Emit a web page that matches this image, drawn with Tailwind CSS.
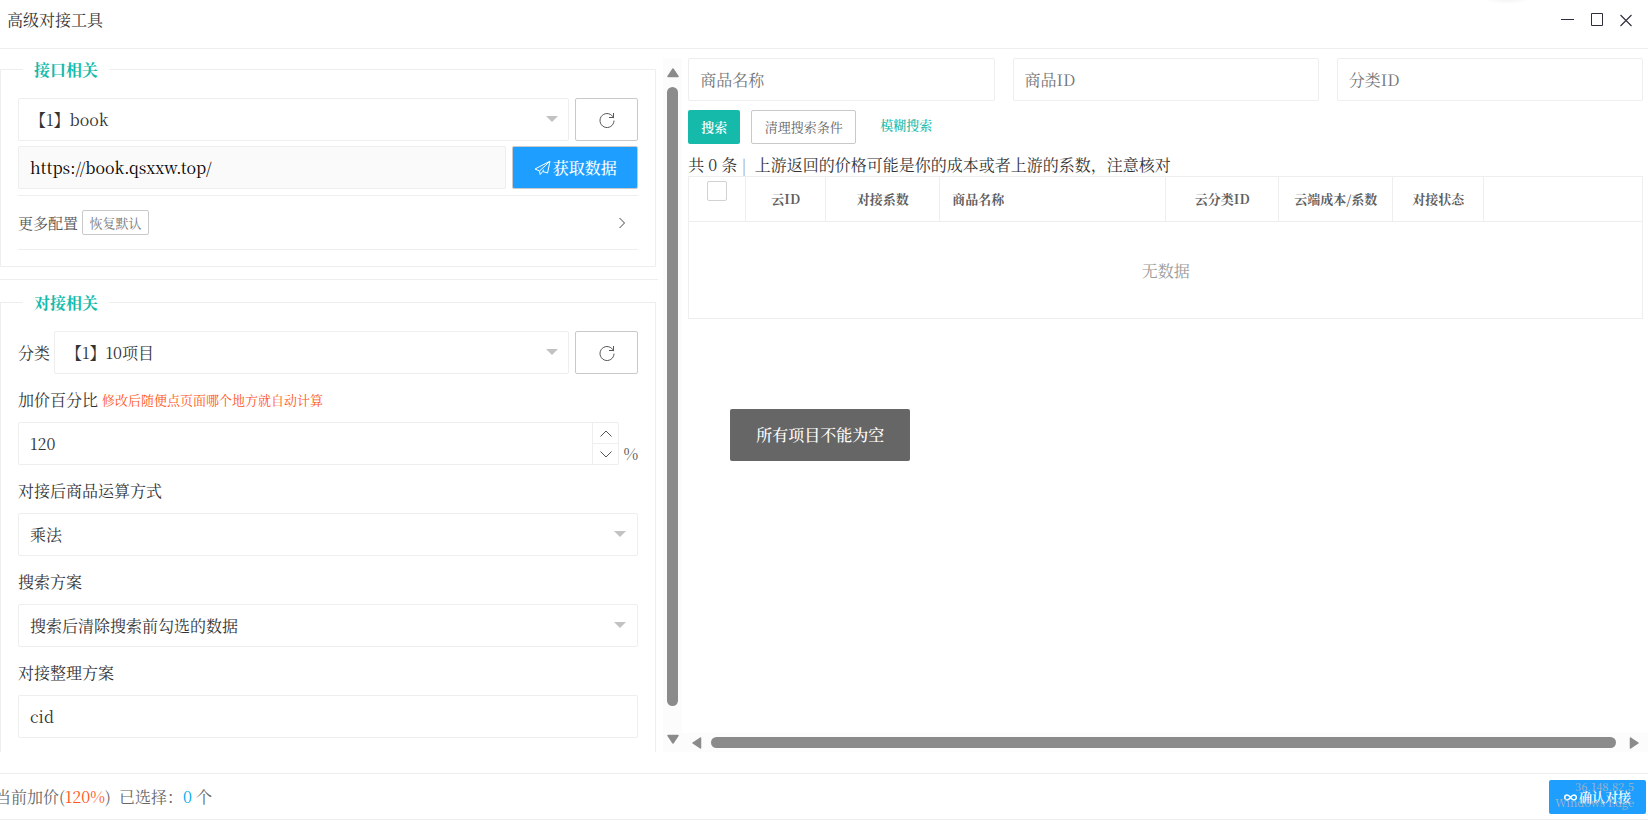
<!DOCTYPE html>
<html lang="zh-CN">
<head>
<meta charset="utf-8">
<title>高级对接工具</title>
<script src="https://cdn.jsdelivr.net/npm/@tailwindcss/browser@4"></script>
</head>
<body class="h-screen flex flex-col overflow-hidden bg-white text-base leading-6 text-[#333] font-['Noto_Serif_CJK_SC','Noto_Serif_SC','Liberation_Serif','Noto_Sans_CJK_SC',serif]">
<svg class="hidden">
  <symbol id="refresh" viewBox="0 0 16 16"><path d="M14.600 6.200A7 7 0 1 0 15 8.600M14.500 1v4.500h-4.500" fill="none" stroke="currentColor" stroke-width="1"/></symbol>
  <symbol id="caret" viewBox="0 0 12 6"><path d="M0 0h12L6 6z" fill="#c2c2c2"/></symbol>
  <symbol id="arrow" viewBox="0 0 12 10"><path d="M6 1 11 8.500H1z" fill="#8b8b8b" stroke="#8b8b8b" stroke-width="1.500" stroke-linejoin="round"/></symbol>
</svg>

<header class="relative h-[49px] shrink-0 flex items-center justify-between border-b border-[#eee] pl-[7px] pr-[15px] pb-2">
  <div class="absolute top-0 left-[90%] w-12 h-1 bg-radial-[at_50%_0%] from-[#f4f4f4] to-white to-70%"></div>
  <h1>高级对接工具</h1>
  <div class="flex items-center gap-[15px] pb-px text-[#2e2d3c]">
    <button aria-label="最小化"><svg class="block w-[14px] h-[14px]" viewBox="0 0 14 14"><path d="M0 6.500h13" stroke="currentColor"/></svg></button>
    <button aria-label="最大化"><svg class="block w-[14px] h-[14px]" viewBox="0 0 14 14"><path d="M1.500.500h11v12h-11z" fill="none" stroke="currentColor"/></svg></button>
    <button aria-label="关闭"><svg class="block w-[14px] h-[14px]" viewBox="0 0 14 14"><path d="M1.500 2 12.500 13M12.500 2 1.500 13" stroke="currentColor" stroke-width="1.100"/></svg></button>
  </div>
</header>

<main class="flex-1 min-h-0 grid grid-cols-[414fr_586fr] pt-[9px] pb-[21px]">
  <section class="min-w-0 min-h-0 flex">
    <div class="flex-1 min-w-0 overflow-hidden pr-[5px]">
      <fieldset class="mr-[2px] border border-[#eee] px-[17px] pb-4">
        <legend class="ml-[5px] px-[11px] leading-[23px] font-bold text-[#16baaa]">接口相关</legend>
        <div class="pt-[17px] flex gap-[6px]">
          <div class="relative flex-1">
            <select aria-label="接口" class="block w-full h-[43px] appearance-none border border-[#eee] rounded-xs pl-[11px] pr-8 bg-white"><option>【1】book</option></select>
            <svg class="absolute right-[11px] top-[18px] w-3 h-[6px] pointer-events-none"><use href="#caret"/></svg>
          </div>
          <button aria-label="刷新接口" class="w-[63px] h-[43px] flex items-center justify-center border border-[#c9c9c9] rounded-xs text-[#555]"><svg class="w-4 h-4"><use href="#refresh"/></svg></button>
        </div>
        <div class="mt-[5px] flex gap-[6px]">
          <input aria-label="接口地址" value="https://book.qsxxw.top/" class="flex-1 min-w-0 h-[43px] border border-[#eee] rounded-xs px-[11px] bg-[#fafafa] text-black">
          <button class="w-[126px] h-[43px] flex items-center justify-center gap-[2px] border border-[#c9c9c9] rounded-xs bg-[#1e9fff] font-medium text-white">
            <svg class="w-[17px] h-4" viewBox="0 0 17 16" fill="none" stroke="currentColor" stroke-width="1" stroke-linejoin="round"><path d="M16 1.200 1 9l4.500 2L16 1.200 13.500 13 8.800 11.500 6.200 14.500 5.500 11M8.800 11.500 9.500 9.500"/></svg>
            获取数据</button>
        </div>
        <div class="mt-[6px] h-[55px] flex items-center border-y border-[#eee] text-[#555]">
          <span class="text-[15px]">更多配置</span>
          <button class="ml-1 h-[25px] w-[67px] border border-[#c9c9c9] rounded-xs text-[13px] leading-5 text-[#777]">恢复默认</button>
          <button aria-label="展开更多配置" class="ml-auto mr-3"><svg class="block w-2 h-3" viewBox="0 0 8 12"><path d="M1.500 1 6.500 6 1.500 11" fill="none" stroke="#444"/></svg></button>
        </div>
      </fieldset>
      <hr class="mt-3 mb-[11px] border-[#eee]">
      <fieldset class="mr-[2px] border border-[#eee] px-[17px] pb-16">
        <legend class="ml-[5px] px-[11px] leading-[23px] font-bold text-[#16baaa]">对接相关</legend>
        <div class="pt-[17px] flex items-center gap-[6px]">
          <label for="cat" class="-mr-[2px]">分类</label>
          <div class="relative flex-1">
            <select id="cat" class="block w-full h-[43px] appearance-none border border-[#eee] rounded-xs pl-[11px] pr-8 bg-white"><option>【1】10项目</option></select>
            <svg class="absolute right-[11px] top-[18px] w-3 h-[6px] pointer-events-none"><use href="#caret"/></svg>
          </div>
          <button aria-label="刷新分类" class="w-[63px] h-[43px] flex items-center justify-center border border-[#c9c9c9] rounded-xs text-[#555]"><svg class="w-4 h-4"><use href="#refresh"/></svg></button>
        </div>
        <div class="h-12 flex items-center gap-1 pt-1"><label for="pct">加价百分比</label><span class="text-[13px] text-[#ff5722]">修改后随便点页面哪个地方就自动计算</span></div>
        <div class="flex items-end gap-1">
          <div class="flex-1 h-[43px] flex border border-[#eee] rounded-xs">
            <input id="pct" value="120" class="flex-1 min-w-0 px-[11px]">
            <div class="w-[26px] flex flex-col border-l border-[#eee]">
              <button aria-label="增加" class="flex-1 flex items-center justify-center border-b border-[#eee]"><svg class="w-3 h-[7px]" viewBox="0 0 12 7"><path d="M.500 6.500 6 1l5.500 5.500" fill="none" stroke="#555"/></svg></button>
              <button aria-label="减少" class="flex-1 flex items-center justify-center"><svg class="w-3 h-[7px]" viewBox="0 0 12 7"><path d="M.500.500 6 6 11.500.500" fill="none" stroke="#555"/></svg></button>
            </div>
          </div>
          <span class="leading-[22px] text-[#555]">%</span>
        </div>
        <label for="op" class="h-12 flex items-center pt-1">对接后商品运算方式</label>
        <div class="relative">
          <select id="op" class="block w-full h-[43px] appearance-none border border-[#eee] rounded-xs pl-[11px] pr-8 bg-white"><option>乘法</option></select>
          <svg class="absolute right-3 top-[18px] w-3 h-[6px] pointer-events-none"><use href="#caret"/></svg>
        </div>
        <label for="plan" class="h-12 flex items-center pt-1">搜索方案</label>
        <div class="relative">
          <select id="plan" class="block w-full h-[43px] appearance-none border border-[#eee] rounded-xs pl-[11px] pr-8 bg-white"><option>搜索后清除搜索前勾选的数据</option></select>
          <svg class="absolute right-3 top-[18px] w-3 h-[6px] pointer-events-none"><use href="#caret"/></svg>
        </div>
        <label for="sort" class="h-12 flex items-center pt-1">对接整理方案</label>
        <input id="sort" value="cid" class="block w-full h-[43px] border border-[#eee] rounded-xs px-[11px]">
      </fieldset>
    </div>
    <div class="w-[19px] shrink-0 flex flex-col items-center bg-[#fcfcfc] pt-[10px] pb-2">
      <svg class="w-3 h-[10px] shrink-0"><use href="#arrow"/></svg>
      <div class="mt-[9px] mb-7 w-[11px] flex-1 rounded-full bg-[#8b8b8b]"></div>
      <svg class="w-3 h-[10px] shrink-0 rotate-180"><use href="#arrow"/></svg>
    </div>
  </section>

  <section class="min-w-0 min-h-0 flex flex-col">
    <div class="relative flex-1 min-h-0 pl-[6px] pr-[5px]">
      <div class="grid grid-cols-3 gap-[18px]">
        <input aria-label="商品名称" placeholder="商品名称" class="min-w-0 h-[43px] border border-[#eee] rounded-xs px-[11px] placeholder:text-[#757575]">
        <input aria-label="商品ID" placeholder="商品ID" class="min-w-0 h-[43px] border border-[#eee] rounded-xs px-[11px] placeholder:text-[#757575]">
        <input aria-label="分类ID" placeholder="分类ID" class="min-w-0 h-[43px] border border-[#eee] rounded-xs px-[11px] placeholder:text-[#757575]">
      </div>
      <div class="mt-[9px] flex text-[13px] leading-5">
        <button class="w-[52px] h-[34px] rounded-xs bg-[#16baaa] text-white font-semibold">搜索</button>
        <button class="ml-[11px] w-[105px] h-[34px] rounded-xs border border-[#c9c9c9] text-[#666]">清理搜索条件</button>
        <a href="#" class="ml-6 pt-[5px] font-medium text-[#16baaa]">模糊搜索</a>
      </div>
      <p class="mt-[9px] whitespace-pre">共 0 条 <span class="text-[#999]">|</span>  上游返回的价格可能是你的成本或者上游的系数，注意核对</p>
      <table class="-mt-px w-full table-fixed border-collapse border border-[#eee] text-[#5f5f5f]">
        <thead>
          <tr class="h-[45px] text-[13px] leading-5">
            <th class="w-[57px] border border-[#eee] p-0 align-top"><input type="checkbox" aria-label="全选" class="block mx-auto mt-1 size-5 appearance-none rounded-xs border border-[#d2d2d2] bg-white"></th>
            <th class="w-20 border border-[#eee] p-0">云ID</th>
            <th class="w-[114px] border border-[#eee] p-0">对接系数</th>
            <th class="w-[226px] border border-[#eee] px-3 text-left">商品名称</th>
            <th class="w-[113px] border border-[#eee] p-0">云分类ID</th>
            <th class="w-[114px] border border-[#eee] p-0 whitespace-nowrap">云端成本/系数</th>
            <th class="w-[91px] border border-[#eee] p-0">对接状态</th>
            <th class="border border-[#eee]"></th>
          </tr>
        </thead>
        <tbody><tr class="h-[97px]"><td colspan="8" class="pt-[2px] text-center text-[#999]">无数据</td></tr></tbody>
      </table>
      <div role="alert" class="absolute left-12 top-[351px] w-[180px] h-[52px] flex items-center justify-center rounded-xs bg-[#666] font-medium text-white">所有项目不能为空</div>
    </div>
    <div class="h-[19px] shrink-0 flex items-center bg-[#fcfcfc] pl-[9px] pr-2">
      <svg class="w-3 h-[10px] shrink-0 -rotate-90"><use href="#arrow"/></svg>
      <div class="ml-2 mr-3 h-[11px] flex-1 rounded-full bg-[#8b8b8b]"></div>
      <svg class="w-3 h-[10px] shrink-0 rotate-90"><use href="#arrow"/></svg>
    </div>
  </section>
</main>

<footer class="h-[47px] shrink-0 flex items-center justify-between border-y border-[#eee] pt-px pr-[2px] text-[#666]">
  <p class="-ml-[5px] whitespace-pre">当前加价(<span class="text-[#ff5722]">120%</span>)  已选择：<span class="text-[#01aaed]">0</span> 个</p>
  <div class="relative">
    <button class="w-[97px] h-[34px] flex items-center justify-center gap-[2px] rounded-xs bg-[#1e9fff] text-[13px] leading-5 font-semibold text-white">
      <svg class="w-[13px] h-[7px]" viewBox="0 0 13 7"><path d="M6.500 3.500C5 1.500 4.200 1 3.200 1a2.500 2.500 0 0 0 0 5c1 0 1.800-.5 3.300-2.500S8.800 1 9.800 1a2.500 2.500 0 0 1 0 5c-1 0-1.800-.5-3.300-2.500z" fill="none" stroke="currentColor" stroke-width="1.500"/></svg>
      确认对接</button>
    <div class="absolute right-3 -top-[2px] text-right text-[11px] leading-4 text-[#a9b4bf] whitespace-nowrap pointer-events-none">36.148.82.5<br>Windows Edge</div>
  </div>
</footer>
</body>
</html>
